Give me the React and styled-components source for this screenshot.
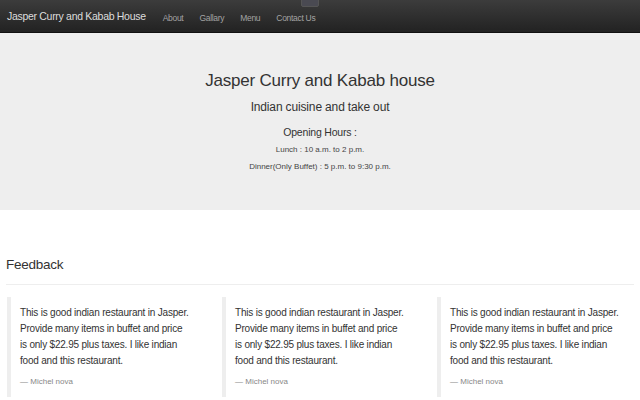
import React from 'react';
import styled, { createGlobalStyle } from 'styled-components';

const GlobalStyle = createGlobalStyle`
  html, body {
    margin: 0;
    padding: 0;
    background: #fff;
    font-family: "Liberation Sans", Arial, sans-serif;
    color: #333;
  }
`;

const Navbar = styled.nav`
  position: relative;
  height: 32px;
  background: linear-gradient(to bottom, #3c3c3c 0%, #222 100%);
  border-bottom: 1px solid #111;
  display: flex;
  align-items: center;
  padding: 0 7px;
`;

const Brand = styled.a`
  color: #ddd;
  font-size: 10.5px;
  letter-spacing: -0.3px;
  text-decoration: none;
  margin-right: 17px;
`;

const NavList = styled.ul`
  display: flex;
  list-style: none;
  margin: 0;
  padding: 0;
  gap: 16px;
`;

const NavLink = styled.a`
  color: #a3a3a3;
  font-size: 8.5px;
  letter-spacing: -0.3px;
  text-decoration: none;
`;

const Broken = styled.span`
  position: absolute;
  left: 301px;
  top: -8px;
  width: 16px;
  height: 13px;
  border: 1px solid #555;
  border-radius: 2px;
  background: #4a4a52;
`;

const Jumbotron = styled.header`
  background: #eee;
  height: 177px;
  display: flex;
  flex-direction: column;
  align-items: center;
  padding-top: 38px;
  box-sizing: border-box;
`;

const Title = styled.h1`
  margin: 0;
  font-size: 17px;
  letter-spacing: -0.2px;
  font-weight: normal;
  color: #333;
`;

const Subtitle = styled.h2`
  margin: 9px 0 0;
  font-size: 12px;
  letter-spacing: -0.15px;
  font-weight: normal;
  color: #333;
`;

const HoursTitle = styled.h3`
  margin: 12px 0 0;
  font-size: 10.5px;
  letter-spacing: -0.2px;
  font-weight: normal;
  color: #333;
`;

const Hours = styled.p`
  margin: ${p => (p.$first ? '7px' : '8px')} 0 0;
  font-size: 8px;
  color: #444;
`;

const Container = styled.main`
  padding: 0 6px;
`;

const PageHeader = styled.div`
  margin-top: 47px;
  padding-bottom: 12px;
  border-bottom: 1px solid #eee;
`;

const Heading = styled.h2`
  margin: 0;
  font-size: 13.5px;
  letter-spacing: -0.25px;
  font-weight: normal;
  color: #333;
`;

const Cards = styled.div`
  display: grid;
  grid-template-columns: repeat(3, 215px);
  margin-top: 12px;
  margin-left: 1px;
`;

const Quote = styled.blockquote`
  margin: 0;
  border-left: 4px solid #eee;
  padding: 8px 12px 8px 9px;
  height: 100px;
  box-sizing: border-box;
`;

const QuoteText = styled.p`
  margin: 0;
  max-width: 170px;
  font-size: 10px;
  letter-spacing: -0.2px;
  line-height: 16px;
  color: #333;
`;

const Footer = styled.footer`
  margin-top: 8px;
  font-size: 8px;
  color: #888;
  &::before {
    content: '\\2014 \\00A0 ';
  }
`;

const links = ['About', 'Gallary', 'Menu', 'Contact Us'];

const feedback = [
  { text: 'This is good indian restaurant in Jasper. Provide many items in buffet and price is only $22.95 plus taxes. I like indian food and this restaurant.', name: 'Michel nova' },
  { text: 'This is good indian restaurant in Jasper. Provide many items in buffet and price is only $22.95 plus taxes. I like indian food and this restaurant.', name: 'Michel nova' },
  { text: 'This is good indian restaurant in Jasper. Provide many items in buffet and price is only $22.95 plus taxes. I like indian food and this restaurant.', name: 'Michel nova' }
];

export default function App() {
  return (
    <>
      <GlobalStyle />
      <Navbar>
        <Brand href="#">Jasper Curry and Kabab House</Brand>
        <NavList>
          {links.map(l => (
            <li key={l}><NavLink href="#">{l}</NavLink></li>
          ))}
        </NavList>
        <Broken />
      </Navbar>
      <Jumbotron>
        <Title>Jasper Curry and Kabab house</Title>
        <Subtitle>Indian cuisine and take out</Subtitle>
        <HoursTitle>Opening Hours :</HoursTitle>
        <Hours $first>Lunch : 10 a.m. to 2 p.m.</Hours>
        <Hours>Dinner(Only Buffet) : 5 p.m. to 9:30 p.m.</Hours>
      </Jumbotron>
      <Container>
        <PageHeader>
          <Heading>Feedback</Heading>
        </PageHeader>
        <Cards>
          {feedback.map((f, i) => (
            <Quote key={i}>
              <QuoteText>{f.text}</QuoteText>
              <Footer>{f.name}</Footer>
            </Quote>
          ))}
        </Cards>
      </Container>
    </>
  );
}
